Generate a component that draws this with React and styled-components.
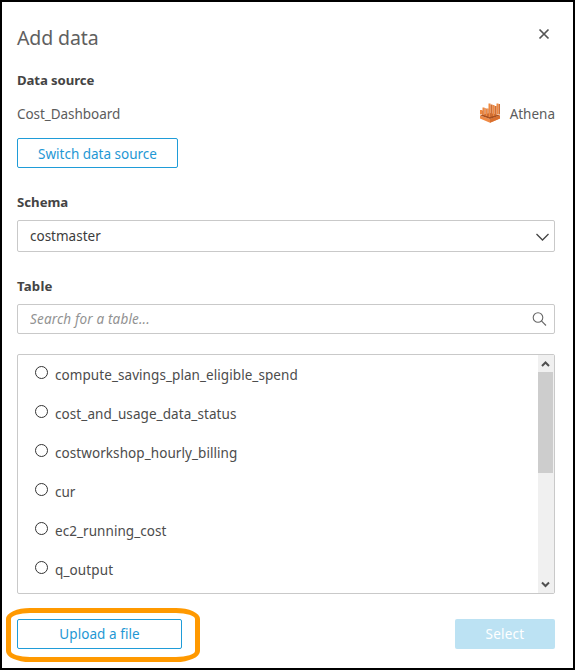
import React from 'react';
import styled, { createGlobalStyle } from 'styled-components';

const GlobalStyle = createGlobalStyle`
  *, *::before, *::after { box-sizing: border-box; }
  body { margin: 0; background: #fff; font-family: "Noto Sans", sans-serif; font-size: 13.5px; color: #4c4c4c; }
  button, input { font: inherit; }
  button { padding: 0; }
`;

const Dialog = styled.main`
  width: 575px;
  height: 670px;
  border: 2px solid #000;
  padding: 22px 18px 0 15px;
  display: flex;
  flex-direction: column;
  background: #fff;
  overflow: hidden;
`;

const Header = styled.header`
  display: flex;
  justify-content: space-between;
  align-items: flex-start;
  height: 46px;
`;

const Title = styled.h1`
  margin: 0;
  font-size: 19.5px;
  font-weight: 400;
  line-height: 28px;
  color: #606060;
`;

const CloseButton = styled.button`
  display: flex;
  margin: 4px 5px 0 0;
  border: 0;
  background: none;
`;

const Label = styled.h2`
  margin: 0;
  font-size: 13.2px;
  font-weight: 700;
  line-height: 20px;
  color: #444;
`;

const Spaced = styled.span`
  letter-spacing: ${(p) => p.$spacing || 0}px;
  white-space: nowrap;
`;

const SourceRow = styled.div`
  display: flex;
  justify-content: space-between;
  align-items: center;
  height: 20px;
  margin: 14px 0;
  color: #5c5c5c;
`;

const Engine = styled.span`
  display: flex;
  align-items: center;
  gap: 10px;
`;

const EngineIcon = styled.svg`
  margin-bottom: 2px;
`;

const OutlineButton = styled.button`
  width: ${(p) => p.$width}px;
  height: 30px;
  flex: none;
  border: 1px solid #1f9cd8;
  border-radius: 2px;
  background: #fff;
  color: #1f98d4;
  line-height: 20px;
  padding-top: ${(p) => p.$drop || 0}px;
`;

const SelectButton = styled.button`
  width: 100px;
  height: 30px;
  border: 0;
  border-radius: 2px;
  background: #bce2f3;
  color: #fff;
  line-height: 20px;
`;

const Field = styled.section`
  margin-top: 24px;
`;

const Box = styled.div`
  display: flex;
  align-items: center;
  justify-content: space-between;
  height: ${(p) => p.$height}px;
  margin-top: ${(p) => p.$gap}px;
  padding: 0 ${(p) => p.$right}px 0 12px;
  border: 1px solid #c9c9c9;
  border-radius: 2px;
  color: #3c3c3c;
`;

const SearchInput = styled.input`
  flex: 1;
  min-width: 0;
  padding: 0;
  border: 0;
  outline: 0;
  background: none;
  font-style: italic;
  letter-spacing: ${(p) => p.$spacing}px;
  &::placeholder { color: #929292; opacity: 1; }
`;

const TableList = styled.div`
  display: flex;
  justify-content: space-between;
  height: 240px;
  flex: none;
  margin-top: 20px;
  border: 1px solid #c9c9c9;
  border-radius: 2px;
`;

const Options = styled.ul`
  margin: 0;
  padding: 0 0 0 17px;
  list-style: none;
`;

const Option = styled.li`
  display: flex;
  align-items: center;
  gap: 7px;
  height: 39px;
  line-height: 20px;
`;

const Radio = styled.span`
  width: 13px;
  height: 13px;
  margin-bottom: 4px;
  border: 1px solid #333;
  border-radius: 50%;
`;

const Scrollbar = styled.div`
  display: flex;
  flex-direction: column;
  width: 16px;
  background: #f0f0f0;
`;

const Arrow = styled.div`
  height: 17px;
  width: 15px;
  flex: none;
  display: flex;
  align-items: center;
  justify-content: center;
`;

const Thumb = styled.div`
  height: 101px;
  width: 15px;
  margin-bottom: auto;
  background: #cdcdcd;
`;

const Footer = styled.footer`
  display: flex;
  justify-content: space-between;
  margin-top: 25px;
`;

const UploadArea = styled.div`
  position: relative;
  height: 30px;
`;

const Highlight = styled.div`
  position: absolute;
  left: -11px;
  top: -11px;
  width: 194px;
  height: 54px;
  border: 5px solid #ff9900;
  border-radius: 24px / 11px;
  pointer-events: none;
`;

const TABLES = [
  ['compute_savings_plan_eligible_spend', 0.07],
  ['cost_and_usage_data_status', 0.08],
  ['costworkshop_hourly_billing', 0.07],
  ['cur', 0],
  ['ec2_running_cost', 0.06],
  ['q_output', 0.12],
];

const AthenaIcon = () => (
  <EngineIcon width="20" height="20" viewBox="0 0 20 20">
    <path d="M0 12.5 10 16 20 12.500V15.500L10 19.800 0 15.500Z" fill="#ef8a45" />
    <path d="M10 16 20 12.500V15.500L10 19.800Z" fill="#d9702f" />
    <path d="M0 12.500 10 10 20 12.500 10 16Z" fill="#a9501f" />
    <path d="M0 7h2v4.500H0zM2.500 4.500h2v7.500h-2zM5.500 5.500h2v7.500h-2zM8.500.5h2v13.500h-2zM12.500 2h2v11h-2zM16.500.5h2v11h-2z" fill="#f0893f" />
    <path d="M2 7.500h.8v4.500H2zM4.500 5h1v8h-1zM7.500 5.500h1v8h-1zM10.500 1.500H12.500v12h-2zM14.500 3h2v9.500h-2zM18.500 1H20v10.500h-1.500z" fill="#cf6f34" />
  </EngineIcon>
);

export default function App() {
  return (
    <>
      <GlobalStyle />
      <Dialog>
        <Header>
          <Title><Spaced $spacing={-0.1}>Add data</Spaced></Title>
          <CloseButton aria-label="Close">
            <svg width="12" height="12" viewBox="0 0 12 12" fill="none" stroke="#555" strokeWidth="1.7">
              <path d="m1.500 1.500 9 9M10.500 1.500l-9 9" />
            </svg>
          </CloseButton>
        </Header>
        <Label><Spaced $spacing={-0.1}>Data source</Spaced></Label>
        <SourceRow>
          <Spaced $spacing={-0.05}>Cost_Dashboard</Spaced>
          <Engine><AthenaIcon /><Spaced>Athena</Spaced></Engine>
        </SourceRow>
        <OutlineButton $width={161} $drop={1}><Spaced>Switch data source</Spaced></OutlineButton>
        <Field>
          <Label><Spaced>Schema</Spaced></Label>
          <Box $height={32} $gap={8} $right={4}>
            <Spaced>costmaster</Spaced>
            <svg width="15" height="9" viewBox="0 0 15 9" fill="none" stroke="#444" strokeWidth="1.3">
              <path d="m1.500 2 6 6 6-6" />
            </svg>
          </Box>
        </Field>
        <Field>
          <Label><Spaced $spacing={0.2}>Table</Spaced></Label>
          <Box $height={30} $gap={8} $right={7}>
            <SearchInput placeholder="Search for a table..." $spacing={0.17} />
            <svg width="15" height="15" viewBox="0 0 15 15" fill="none" stroke="#666" strokeWidth="1.1">
              <circle cx="6" cy="5.500" r="4.800" />
              <path d="m9.400 8.900 4.600 4.600" />
            </svg>
          </Box>
        </Field>
        <TableList>
          <Options>
            {TABLES.map(([name, spacing]) => (
              <Option key={name}><Radio /><Spaced $spacing={spacing}>{name}</Spaced></Option>
            ))}
          </Options>
          <Scrollbar>
            <Arrow>
              <svg width="9" height="7" viewBox="0 0 9 7" fill="none" stroke="#505050" strokeWidth="2">
                <path d="m1 6 3.500-3.500L8 6" />
              </svg>
            </Arrow>
            <Thumb />
            <Arrow>
              <svg width="9" height="7" viewBox="0 0 9 7" fill="none" stroke="#505050" strokeWidth="2">
                <path d="m1 1.500 3.500 3.500L8 1.500" />
              </svg>
            </Arrow>
          </Scrollbar>
        </TableList>
        <Footer>
          <UploadArea>
            <OutlineButton $width={165}><Spaced $spacing={0.06}>Upload a file</Spaced></OutlineButton>
            <Highlight />
          </UploadArea>
          <SelectButton><Spaced $spacing={0.25}>Select</Spaced></SelectButton>
        </Footer>
      </Dialog>
    </>
  );
}
